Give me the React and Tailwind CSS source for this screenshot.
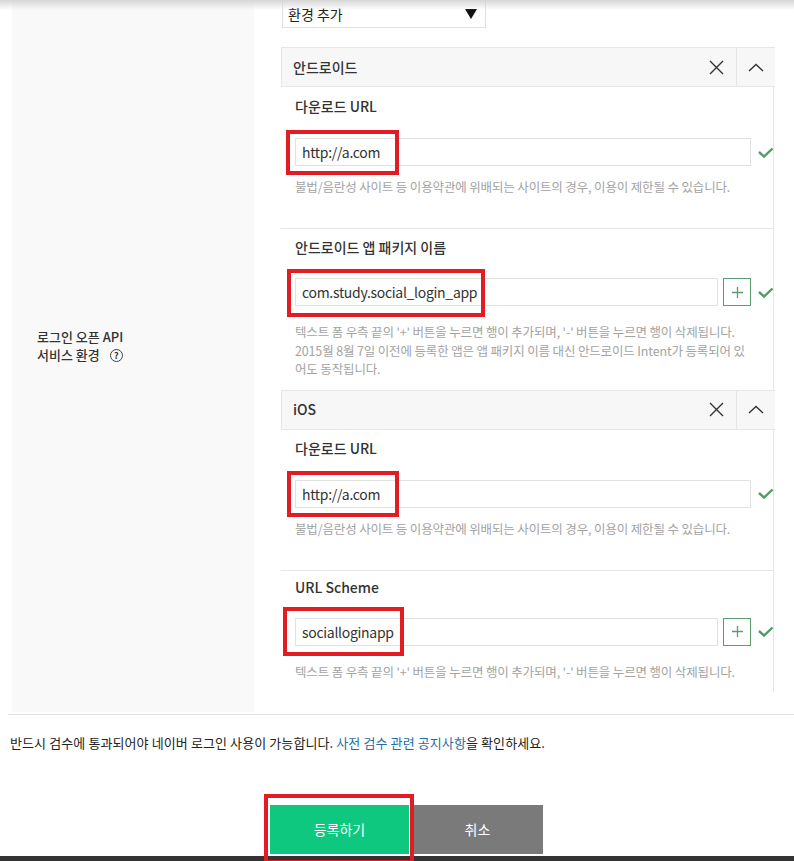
import React from "react";

const font = { fontFamily: '"Noto Sans CJK KR", "Noto Sans", sans-serif' };

const Check = () => (
    <svg className="ml-[7px] shrink-0 overflow-visible" width="15" height="11" viewBox="0 0 15 11">
        <polyline points="1,5 6,9.5 14.5,1.5" fill="none" stroke="#4f9b69" strokeWidth="2.4" />
    </svg>
);

const Highlight = ({ className }) => (
    <div className={`absolute border-4 border-[#e31b23] pointer-events-none z-10 ${className}`}></div>
);

const PanelHeader = ({ title }) => (
    <div className="flex h-[40px] items-stretch border-y border-l border-[#e6e6e6] bg-[#f7f7f7] w-[494px]">
        <div className="flex-1 flex items-center pl-[11px] text-[14px] font-medium text-[#333]">{title}</div>
        <div className="w-[40px] flex items-center justify-center">
            <svg width="15" height="15" viewBox="0 0 15 15">
                <path d="M1 1L14 14M14 1L1 14" stroke="#333" strokeWidth="1.4" fill="none" />
            </svg>
        </div>
        <div className="w-[39px] border-l border-[#e6e6e6] flex items-center justify-center">
            <svg width="16" height="9" viewBox="0 0 16 9">
                <path d="M1 8L8 1.5L15 8" stroke="#333" strokeWidth="1.4" fill="none" />
            </svg>
        </div>
    </div>
);

const Field = ({ label, value, plus, highlight, help, className }) => (
    <div className={`pl-[14px] ${className}`}>
        <div className="h-[20px] leading-[20px] text-[14px] font-medium text-[#333]">{label}</div>
        <div className={`flex items-center ${plus ? "mt-[21px]" : "mt-[22px]"}`}>
            <div className={`relative h-[28px] border border-[#e1e1e1] bg-white ${plus ? "w-[425px]" : "w-[458px]"}`}>
                <div className="pl-[6px] leading-[26px] text-[14px] tracking-[-0.3px] text-[#333]">{value}</div>
                <Highlight className={highlight} />
            </div>
            {plus && (
                <div className="ml-[5px] w-[28px] h-[28px] border border-[#5d9c70] flex items-center justify-center">
                    <svg width="11" height="11" viewBox="0 0 11 11">
                        <path d="M5.5 0V11M0 5.5H11" stroke="#5d9c70" strokeWidth="1.3" />
                    </svg>
                </div>
            )}
            <Check />
        </div>
        {help}
    </div>
);

const helpUrl = (
    <div className="mt-[12px] text-[12.5px] leading-[18px] tracking-[-0.15px] text-[#a3a3a3] whitespace-nowrap">
        불법/음란성 사이트 등 이용약관에 위배되는 사이트의 경우, 이용이 제한될 수 있습니다.
    </div>
);

export default function App() {
    return (
        <div className="relative min-h-[861px] bg-white overflow-hidden" style={font}>
            <div className="absolute top-0 left-0 right-0 h-[10px] bg-linear-to-b from-[#d6d6d6] to-transparent z-20 pointer-events-none"></div>

            <div className="flex pl-[12px] h-[713px]">
                <div className="w-[242px] h-[712px] bg-[#f9f9f9] flex items-center pl-[25px] pb-[20px]">
                    <div className="text-[13px] leading-[18px] font-medium text-[#333]">
                        <div>로그인 오픈 API</div>
                        <div className="flex items-center">
                            서비스 환경
                            <span className="ml-[10px] w-[13px] h-[13px] rounded-full border border-[#444] flex items-center justify-center text-[9px] leading-none font-bold">?</span>
                        </div>
                    </div>
                </div>

                <div className="pl-[27px] flex flex-col">
                    <div className="ml-px w-[204px] h-[28px] border border-[#e0e0e0] flex items-center justify-between pl-[5px] pr-[8px]">
                        <span className="text-[14px] text-[#222]">환경 추가</span>
                        <svg width="12" height="10" viewBox="0 0 12 10">
                            <path d="M0 0H12L6 10Z" fill="#111" />
                        </svg>
                    </div>

                    <div className="mt-[19px]">
                        <PanelHeader title="안드로이드" />
                        <div className="w-[493px] border-r border-[#e6e6e6]">
                            <Field
                                className="pt-[9px] pb-[32px] border-b border-[#e6e6e6]"
                                label="다운로드 URL"
                                value="http://a.com"
                                highlight="-left-[10px] -top-[9px] w-[113px] h-[45px]"
                                help={helpUrl}
                            />
                            <Field
                                className="pt-[8px] pb-[11px]"
                                label="안드로이드 앱 패키지 이름"
                                value="com.study.social_login_app"
                                plus
                                highlight="-left-[9px] -top-[10px] w-[198px] h-[48px]"
                                help={
                                    <div className="mt-[17px] text-[12.5px] leading-[18.5px] tracking-[-0.15px] text-[#a3a3a3] whitespace-nowrap">
                                        텍스트 폼 우측 끝의 '+' 버튼을 누르면 행이 추가되며, '-' 버튼을 누르면 행이 삭제됩니다.<br />
                                        2015월 8월 7일 이전에 등록한 앱은 앱 패키지 이름 대신 안드로이드 Intent가 등록되어 있<br />
                                        어도 동작됩니다.
                                    </div>
                                }
                            />
                        </div>

                        <PanelHeader title="iOS" />
                        <div className="w-[493px] border-r border-[#e6e6e6]">
                            <Field
                                className="pt-[8px] pb-[32px] border-b border-[#e6e6e6]"
                                label="다운로드 URL"
                                value="http://a.com"
                                highlight="-left-[9px] -top-[10px] w-[112px] h-[46px]"
                                help={helpUrl}
                            />
                            <Field
                                className="pt-[6px] pb-[11px]"
                                label="URL Scheme"
                                value="socialloginapp"
                                plus
                                highlight="-left-[13px] -top-[12px] w-[121px] h-[49px]"
                                help={
                                    <div className="mt-[17px] text-[12.5px] leading-[18px] tracking-[-0.15px] text-[#a3a3a3] whitespace-nowrap">
                                        텍스트 폼 우측 끝의 '+' 버튼을 누르면 행이 추가되며, '-' 버튼을 누르면 행이 삭제됩니다.
                                    </div>
                                }
                            />
                        </div>
                    </div>
                </div>
            </div>

            <div className="ml-[8px] mt-px h-px bg-[#e3e3e3]"></div>

            <div className="mt-[18px] pl-[10px] text-[13px] leading-[20px] tracking-[0.1px] text-[#222] whitespace-nowrap">
                반드시 검수에 통과되어야 네이버 로그인 사용이 가능합니다. <span className="text-[#1f6fa6]">사전 검수 관련 공지사항</span>을 확인하세요.
            </div>

            <div className="mt-[52px] flex justify-center pl-[19px]">
                <div className="relative w-[139px] h-[49px] bg-[#0dc87e] flex items-center justify-center text-[14px] text-white">
                    등록하기
                    <Highlight className="-left-[6px] -top-[11px] w-[150px] h-[70px]" />
                </div>
                <div className="ml-[3px] w-[131px] h-[49px] bg-[#7a7a7a] flex items-center justify-center text-[14px] text-white">
                    취소
                </div>
            </div>

            <div className="mt-[2px] h-[6px] bg-[#333]"></div>
        </div>
    );
}
